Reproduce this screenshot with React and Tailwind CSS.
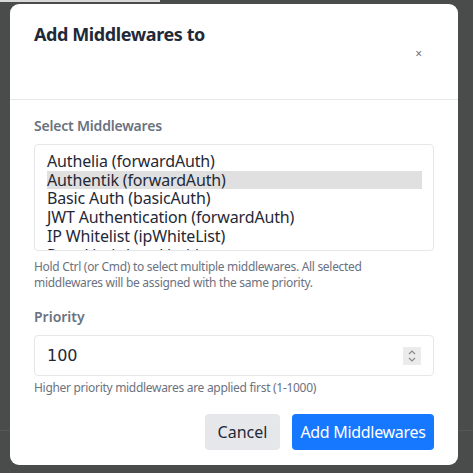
export default function App() {
  const options = [
    "Authelia (forwardAuth)",
    "Authentik (forwardAuth)",
    "Basic Auth (basicAuth)",
    "JWT Authentication (forwardAuth)",
    "IP Whitelist (ipWhiteList)",
    "Rate Limit (rateLimit)",
  ];
  return (
    <div
      className="relative w-[473px] h-[473px] bg-[#4a4b4b] overflow-hidden"
      style={{ fontFamily: '"Noto Sans", "Open Sans", sans-serif' }}
    >
      <div className="absolute left-0 top-0 w-[160px] h-[2px] bg-[#d9d9d9]" />
      <div className="absolute left-0 top-[430px] w-full h-[1px] bg-[#555656]" />
      <div className="absolute left-[10px] top-[4px] w-[448px] h-[461px] bg-white rounded-[9px] flex flex-col">
        <div className="h-[96px] px-6 pt-[16px] flex items-start justify-between border-b border-[#e5e7eb]">
          <h2 className="text-[18px] leading-[28px] font-bold text-[#1f2937] tracking-[-0.4px]">Add Middlewares to</h2>
          <button className="mt-[26px] mr-[12px] text-[12px] leading-[16px] text-[#6b7280]">×</button>
        </div>
        <div className="px-6 pt-4">
          <div className="text-[14px] leading-[20px] font-semibold text-[#6b7280] mb-2 tracking-[-0.2px]">Select Middlewares</div>
          <div className="h-[107px] border border-[#e5e7eb] rounded-[4px] overflow-hidden pl-[12px] pr-[11px] pt-[7px]">
            {options.map((o, i) => (
              <div
                key={o}
                className={`text-[16px] leading-[18.7px] text-[#1f2937] whitespace-nowrap tracking-[-0.15px] ${i === 1 ? "bg-[#e0e0e0]" : ""}`}
              >
                {o}
              </div>
            ))}
          </div>
          <p className="mt-2 text-[12px] leading-[16px] text-[#6b7280] tracking-[-0.3px] pr-[50px]">
            Hold Ctrl (or Cmd) to select multiple middlewares. All selected middlewares will be assigned with the same priority.
          </p>
          <div className="mt-4 text-[14px] leading-[20px] font-semibold text-[#6b7280] mb-2">Priority</div>
          <div className="h-[41px] border border-[#e5e7eb] rounded-[4px] flex items-center justify-between pl-[12px] pr-[12px]">
            <span className="text-[16px] text-[#1f2937]" style={{ fontFamily: '"DejaVu Sans", sans-serif' }}>100</span>
            <span className="w-[18px] h-[18px] bg-[#ebebeb] flex items-center justify-center">
              <svg width="10" height="14" viewBox="0 0 10 14" fill="none" stroke="#8a8a8a" strokeWidth="1.2">
                <path d="M2 5 L5 2 L8 5" />
                <path d="M2 9 L5 12 L8 9" />
              </svg>
            </span>
          </div>
          <p className="mt-[4px] text-[12px] leading-[16px] text-[#6b7280] tracking-[-0.3px]">Higher priority middlewares are applied first (1-1000)</p>
          <div className="mt-[18px] flex justify-end gap-3">
            <button className="h-[36px] w-[75px] rounded-[4px] bg-[#e5e7eb] text-[16px] text-[#1f2937]">Cancel</button>
            <button className="h-[36px] w-[142px] rounded-[4px] bg-[#1677ff] text-[16px] text-white tracking-[-0.3px]">Add Middlewares</button>
          </div>
        </div>
      </div>
    </div>
  );
}
